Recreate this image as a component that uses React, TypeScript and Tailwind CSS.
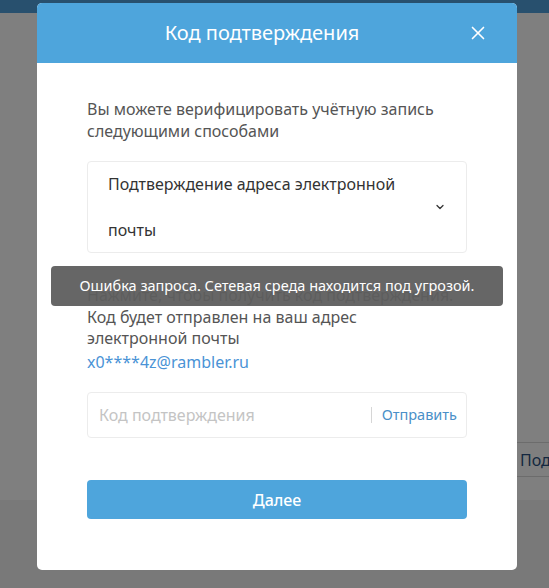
import { ChevronDown, X } from "lucide-react";

export default function App() {
    return (
        <div className="relative h-[588px] w-[549px] overflow-hidden bg-white font-['Noto_Sans',sans-serif]">
            {/* Page under the overlay */}
            <div className="flex h-full flex-col">
                <div className="h-[13px] bg-[#51a0dc]" />
                <div className="flex flex-1 flex-col bg-white">
                    <div className="h-[429px]" />
                    <div className="flex h-[35px] justify-end">
                        <div className="flex w-[32px] items-center overflow-hidden border-y border-[#d8d8d8] pl-[3px]">
                            <span className="whitespace-nowrap text-[16px] text-[#294f80]">Подтвердить</span>
                        </div>
                    </div>
                    <div className="h-[23px]" />
                </div>
                <div className="h-[88px] bg-[#f3f3f3]" />
            </div>

            {/* Overlay */}
            <div className="absolute inset-0 bg-black/50" />

            {/* Modal */}
            <div className="absolute left-[37px] top-[3px] flex h-[567px] w-[480px] flex-col rounded-[5px] bg-white">
                <div className="flex h-[60px] items-center rounded-t-[5px] bg-[#4ea5dc] pl-[20px] pr-[28px]">
                    <h2 className="flex-1 text-center text-[20px] text-white">Код подтверждения</h2>
                    <X className="h-[22px] w-[22px] text-white" strokeWidth={1.8} />
                </div>

                <div className="flex flex-col px-[50px] pt-[36px]">
                    <p className="text-[16px] leading-[21.5px] text-[#555]">
                        Вы можете верифицировать учётную запись
                        <br />
                        следующими способами
                    </p>

                    <div className="mt-[19px] flex h-[92px] items-center rounded-[4px] border border-[#ececec] pl-[20px] pr-[20px]">
                        <span className="flex-1 text-[16px] leading-[46px] text-[#333]">
                            Подтверждение адреса электронной
                            <br />
                            почты
                        </span>
                        <ChevronDown className="h-[12px] w-[12px] text-[#333]" strokeWidth={2.5} />
                    </div>

                    <div className="mt-[32px] text-[16px] leading-[21.5px] text-[#555]">
                        <p>Нажмите, чтобы получить код подтверждения.</p>
                        <p>
                            Код будет отправлен на ваш адрес
                            <br />
                            электронной почты
                        </p>
                        <p className="mt-[2px] text-[#4a93d6]">x0****4z@rambler.ru</p>
                    </div>

                    <div className="mt-[19px] flex h-[46px] items-center rounded-[4px] border border-[#ececec] pl-[11px] pr-[9px]">
                        <span className="flex-1 text-[16px] text-[#c4c4c4]">Код подтверждения</span>
                        <span className="mr-[10px] h-[16px] w-px bg-[#d6d6d6]" />
                        <span className="text-[14.5px] text-[#4a90c8]">Отправить</span>
                    </div>

                    <button className="mt-[42px] h-[39px] rounded-[4px] bg-[#4ea5dc] text-[16px] font-medium text-white">
                        Далее
                    </button>
                </div>
            </div>

            {/* Toast */}
            <div className="absolute left-[51px] top-[266px] flex h-[40px] w-[452px] items-center justify-center rounded-[4px] bg-[#5e5e5e]/95">
                <span className="whitespace-nowrap text-[14.5px] text-white">
                    Ошибка запроса. Сетевая среда находится под угрозой.
                </span>
            </div>
        </div>
    );
}
